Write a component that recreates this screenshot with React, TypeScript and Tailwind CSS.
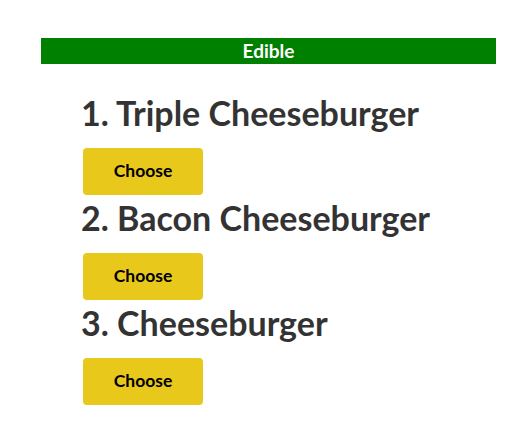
const items = ["Triple Cheeseburger", "Bacon Cheeseburger", "Cheeseburger"];

export default function App() {
  return (
    <div className="min-h-[440px] bg-white font-['Lato',sans-serif]">
      <div className="pt-[38px] pl-[41px]">
        <div className="w-[455px] h-[26px] bg-[#008000] text-white text-center font-bold text-[19px] leading-[26px]">
          Edible
        </div>
      </div>
      <ol className="pl-[81px] pt-[26px]">
        {items.map((name, i) => (
          <li key={name} className="flex flex-col">
            <h2 className="text-[34px] leading-[46px] font-bold text-[#333333]">
              {i + 1}. {name}
            </h2>
            <button className="ml-[2px] mt-[12px] w-[120px] h-[47px] rounded-[4px] bg-[#e9c81c] text-black font-bold text-[17.5px]">
              Choose
            </button>
          </li>
        ))}
      </ol>
    </div>
  );
}
